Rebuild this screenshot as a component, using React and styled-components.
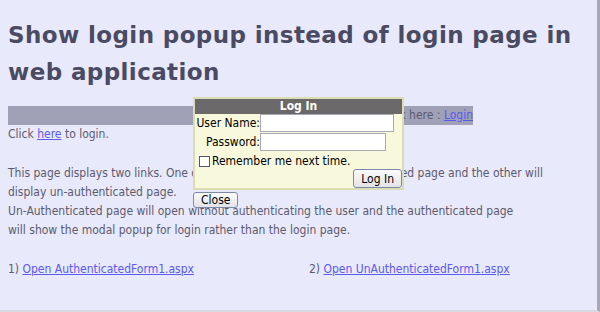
import React from "react";
import styled, { createGlobalStyle } from "styled-components";

const Global = createGlobalStyle`
  html, body { margin: 0; padding: 0; background: #e9e9fc; }
  body { font-family: "DejaVu Sans Condensed", "DejaVu Sans", sans-serif; }
`;

const Page = styled.div`
  box-sizing: border-box;
  width: 600px;
  height: 312px;
  padding: 0 0 0 8px;
  border-right: 3px solid #a7a7b8;
  border-bottom: 2px solid #d9d9e4;
  position: relative;
  color: #5b5b6d;
  font-size: 12px;
  line-height: 19px;
`;

const Title = styled.h1`
  margin: 0;
  padding-top: 17px;
  font-family: "DejaVu Sans", sans-serif;
  font-size: 23px;
  letter-spacing: 0.4px;
  line-height: 37px;
  font-weight: bold;
  color: #4a4a62;
  width: 570px;
`;

const StatusBar = styled.div`
  margin-top: 15px;
  width: 465px;
  height: 19px;
  background: #a0a0b6;
  text-align: right;
  color: #5b5b6d;
  line-height: 19px;
`;

const Link = styled.a`
  color: #5a5aee;
  text-decoration: underline;
  cursor: pointer;
`;

const Para = styled.p`
  margin: 0 0 20px 0;
  white-space: nowrap;
`;

const LinkRow = styled.div`
  display: grid;
  grid-template-columns: 301px 1fr;
`;

const Overlay = styled.div`
  position: absolute;
  left: 193px;
  top: 97px;
`;

const Popup = styled.div`
  box-sizing: border-box;
  width: 211px;
  height: 93px;
  background: #f8f8dc;
  border: 2px solid #dcdcb4;
  display: flex;
  flex-direction: column;
  color: #000;
  font-size: 12px;
`;

const PopupHeader = styled.div`
  background: #6b6869;
  color: #fff;
  font-weight: bold;
  text-align: center;
  height: 15px;
  line-height: 15px;
  font-size: 12px;
`;

const FieldRow = styled.div`
  display: flex;
  align-items: center;
  height: 19px;
`;

const Label = styled.label`
  width: 65px;
  text-align: right;
  line-height: 16px;
`;

const Input = styled.input`
  box-sizing: border-box;
  width: ${(p) => p.$w}px;
  height: 18px;
  margin: 0;
  border: 1px solid #a9a9b3;
  background: #fff;
  padding: 0;
`;

const CheckRow = styled.div`
  display: flex;
  align-items: center;
  gap: 2px;
  height: 16px;
  margin-top: 2px;
  padding-left: 4px;
`;

const Box = styled.span`
  box-sizing: border-box;
  width: 11px;
  height: 11px;
  border: 1px solid #55557a;
  background: #fff;
`;

const Actions = styled.div`
  display: flex;
  justify-content: flex-end;
`;

const Btn = styled.button`
  box-sizing: border-box;
  height: ${(p) => p.$h || 19}px;
  padding: 0 7px;
  font-family: "DejaVu Sans Condensed", "DejaVu Sans", sans-serif;
  font-size: 12px;
  color: #000;
  background: linear-gradient(#fbfbfb, #e3e3e8);
  border: 1px solid #7a8aa6;
  border-radius: 3px;
  line-height: 14px;
`;

const CloseWrap = styled.div`
  margin-top: 1px;
`;

export default function App() {
  return (
    <>
      <Global />
      <Page>
        <Title>Show login popup instead of login page in web application</Title>
        <StatusBar>
          You are not logged in. To login click here : <Link>Login</Link>
        </StatusBar>
        <Para>
          Click <Link>here</Link> to login.
        </Para>
        <Para>
          This page displays two links. One of the links will display the authenticated page and the other will
          <br />
          display un-authenticated page.
          <br />
          Un-Authenticated page will open without authenticating the user and the authenticated page
          <br />
          will show the modal popup for login rather than the login page.
        </Para>
        <LinkRow>
          <div>
            1) <Link>Open AuthenticatedForm1.aspx</Link>
          </div>
          <div>
            2) <Link>Open UnAuthenticatedForm1.aspx</Link>
          </div>
        </LinkRow>
        <Overlay>
          <Popup>
            <PopupHeader>Log In</PopupHeader>
            <FieldRow>
              <Label>User Name:</Label>
              <Input $w={134} />
            </FieldRow>
            <FieldRow>
              <Label>Password:</Label>
              <Input type="password" $w={126} />
            </FieldRow>
            <CheckRow>
              <Box />
              <span>Remember me next time.</span>
            </CheckRow>
            <Actions>
              <Btn>Log In</Btn>
            </Actions>
          </Popup>
          <CloseWrap>
            <Btn $h={16}>Close</Btn>
          </CloseWrap>
        </Overlay>
      </Page>
    </>
  );
}
